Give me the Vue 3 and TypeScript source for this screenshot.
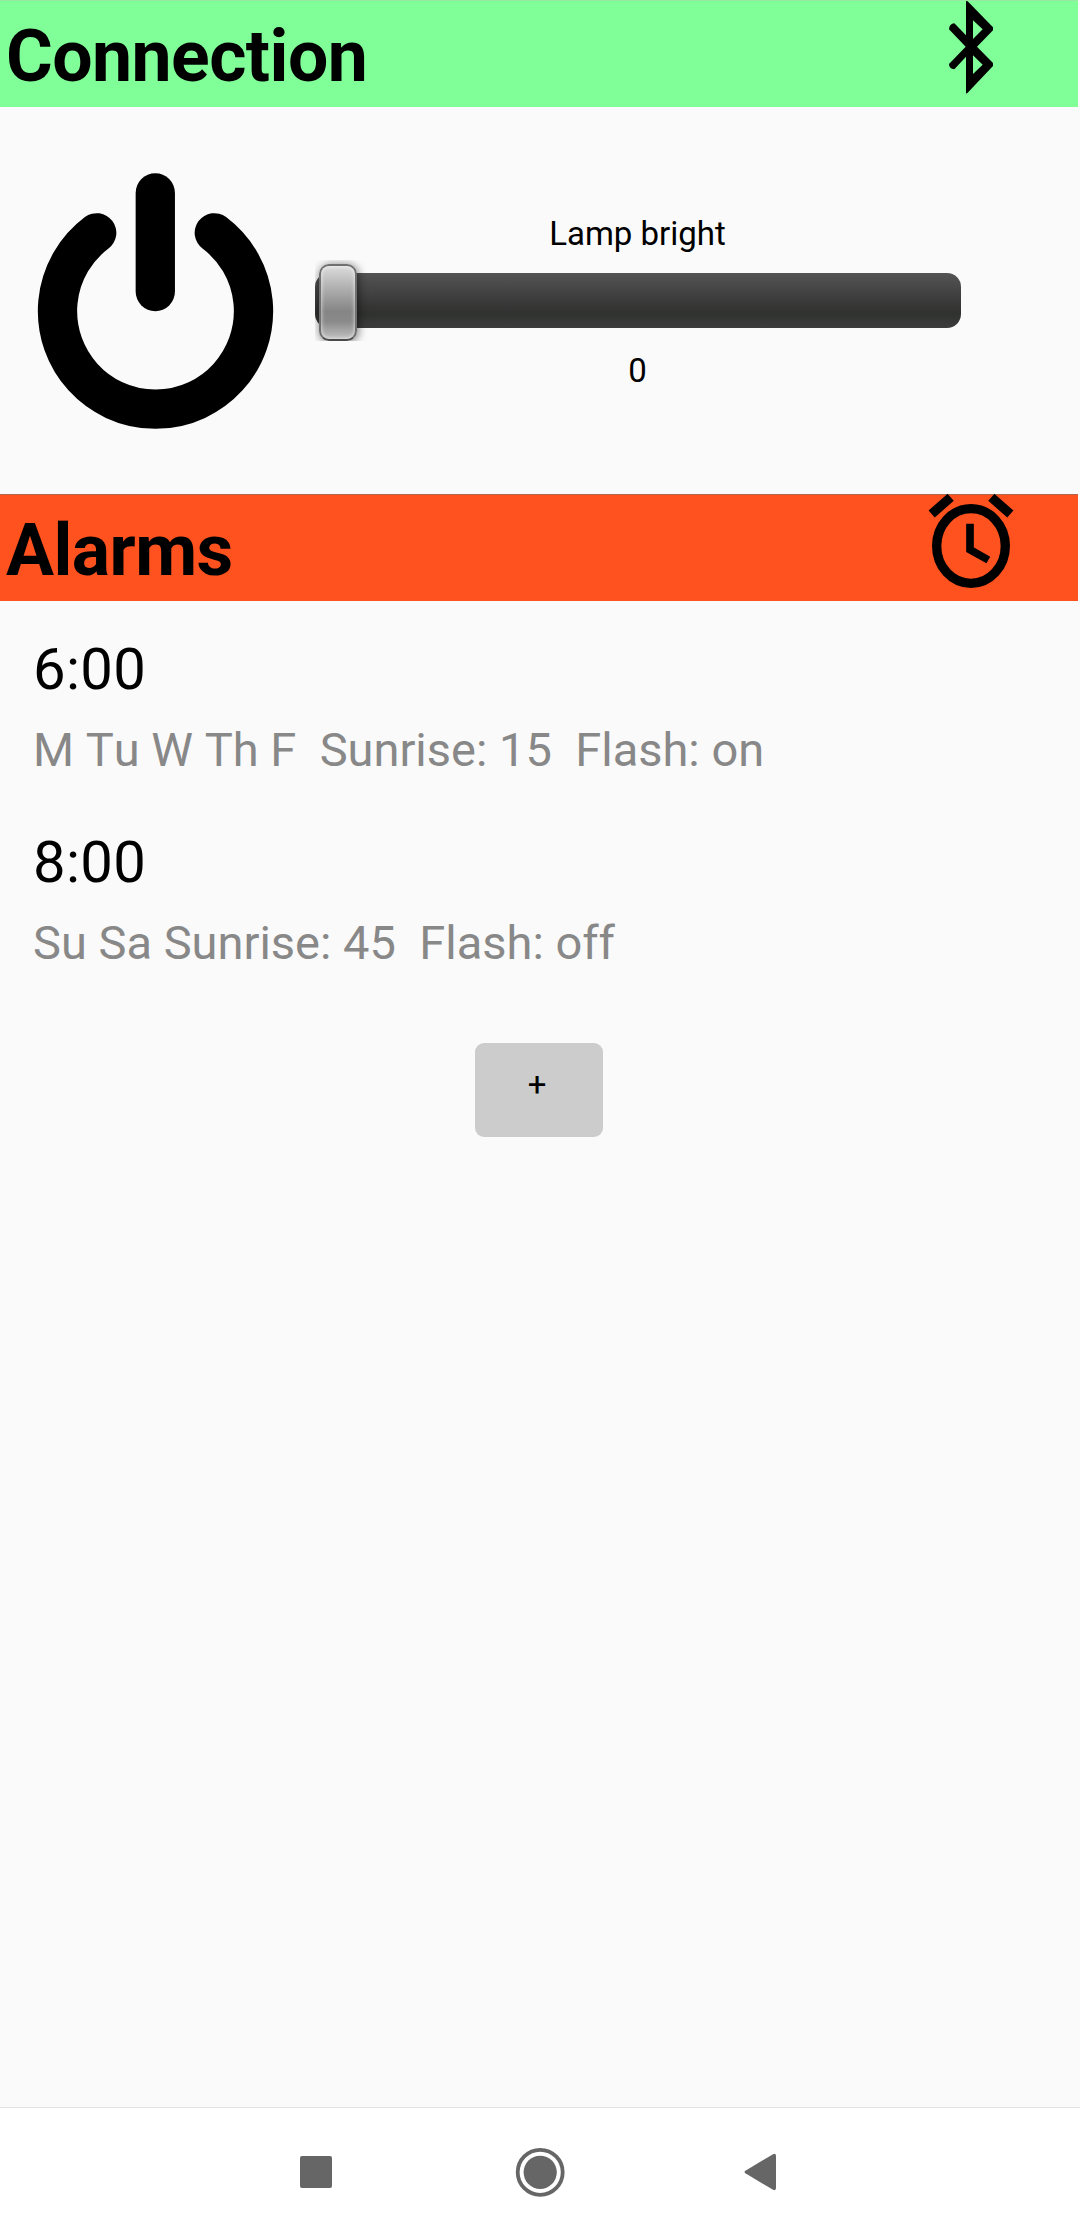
<script setup lang="ts">
import { ref } from 'vue'

interface Alarm {
  time: string
  details: string
}

const brightness = ref<number>(0)
const alarms = ref<Alarm[]>([
  { time: '6:00', details: 'M Tu W Th F  Sunrise: 15  Flash: on' },
  { time: '8:00', details: 'Su Sa Sunrise: 45  Flash: off' },
])
</script>

<template>
  <div class="screen">
    <header class="bar connection">
      <h1>Connection</h1>
      <svg class="bar-icon" viewBox="2 0 300 321">
        <path
          fill-rule="evenodd"
          d="M77 3L82 4L158 82V91L110 140L158 189V198L82 278L77 281V170L42 208Q26 206 26 192L76 140L26 88Q27 71 42 70L77 106ZM98 61V117L127 88ZM98 166V222L127 194Z"
        />
      </svg>
    </header>

    <section class="lamp">
      <svg class="power" viewBox="0 0 240 262">
        <g fill="none" stroke="#000" stroke-width="39.3" stroke-linecap="round">
          <path d="M60.7 64.8A98 98 0 1 0 178.3 64.8" />
          <path d="M119.3 25V123.5" />
        </g>
      </svg>
      <div class="control">
        <div class="label">Lamp bright</div>
        <div class="track">
          <div class="thumb-area"><div class="thumb"></div></div>
        </div>
        <div class="value">{{ brightness }}</div>
      </div>
    </section>

    <header class="bar alarms">
      <h1>Alarms</h1>
      <svg class="bar-icon" viewBox="2 0 300 321">
        <g fill="none" stroke="#000">
          <ellipse cx="92" cy="156" rx="103" ry="112" stroke-width="28" />
          <path d="M89 89V167L144 198" stroke-width="23" />
          <path d="M-26 60L31 10M153 10L210 60" stroke-width="28" />
        </g>
      </svg>
    </header>

    <ul class="list">
      <li v-for="alarm in alarms" :key="alarm.time">
        <div class="time">{{ alarm.time }}</div>
        <div class="details">{{ alarm.details }}</div>
      </li>
    </ul>

    <button class="add" type="button">+</button>

    <nav class="nav">
      <svg viewBox="0 0 50 50"><rect x="9" y="9" width="32" height="32" rx="2" /></svg>
      <svg viewBox="0 0 50 50">
        <circle cx="27.2" cy="25.3" r="16.6" />
        <circle cx="27.2" cy="25.3" r="22.5" fill="none" stroke="#666" stroke-width="3.8" />
      </svg>
      <svg viewBox="0 0 50 50">
        <path d="M10.4 23.8L38 7.2Q41 6 41 9V41Q41 44 38 42.8L10.4 26.2Q8.6 25 10.4 23.8Z" />
      </svg>
    </nav>
  </div>
</template>

<style>
body {
  margin: 0;
}
</style>

<style scoped>
.screen {
  display: flex;
  flex-direction: column;
  width: 1080px;
  height: 2237px;
  overflow: hidden;
  background: #fafafa;
  color: #000;
  font-family: Roboto, sans-serif;
}
.bar {
  box-sizing: border-box;
  display: flex;
  justify-content: space-between;
  flex: none;
  width: 1078px;
  height: 107px;
  padding: 0 37px 0 6px;
  overflow: hidden;
}
.connection {
  background: linear-gradient(#98e8a4 1px, #80ff99 1px);
}
.alarms {
  background: linear-gradient(#b2664c 1px, #ff521f 1px);
}
h1 {
  margin: 0;
  font-size: 71.5px;
  font-weight: 700;
  line-height: 113px;
  letter-spacing: -0.55px;
}
.bar-icon {
  width: 100px;
  height: 107px;
  overflow: visible;
}
.lamp {
  display: flex;
  flex: none;
  height: 387px;
}
.power {
  width: 240px;
  height: 262px;
  margin: 61px 39px 0 36px;
}
.control {
  width: 646px;
  padding-top: 107px;
  text-align: center;
  font-size: 33px;
  line-height: 40px;
}
.label,
.value {
  padding-right: 1px;
}
.track {
  position: relative;
  height: 55px;
  margin: 19px 0 23px;
  border-radius: 14px;
  background: linear-gradient(#545454, #363636 60%, #30322f 74%, #3c3c3c);
}
.thumb-area {
  position: absolute;
  left: 0;
  top: -13px;
  width: 62px;
  height: 81px;
  overflow: hidden;
}
.thumb {
  box-sizing: border-box;
  width: 38px;
  height: 77px;
  margin: 4px 0 0 4px;
  border: 2px solid #707070;
  border-bottom-color: #4a4a4a;
  border-radius: 10px;
  background: linear-gradient(#dcdcdc, #b0b0b0 30%, #858585 62%, #8a8a8a 76%, #c0c0c0);
  box-shadow: 1px 1px 10px rgba(0, 0, 0, 0.55), inset 0 0 4px rgba(255, 255, 255, 0.8);
}
.list {
  margin: 0;
  padding: 0;
  list-style: none;
}
.list li {
  height: 146px;
  padding: 33px 33px 14px;
}
.time {
  font-size: 58px;
  line-height: 70px;
  margin-bottom: 16px;
  letter-spacing: 0.3px;
}
.details {
  color: #888;
  font-size: 47.03px;
  line-height: 60px;
  white-space: pre;
  font-kerning: none;
}
.add {
  box-sizing: border-box;
  flex: none;
  width: 128px;
  height: 94px;
  margin: 56px 0 0 475px;
  padding: 0 4px 11px 0;
  border: 0;
  border-radius: 9px;
  background: #ccc;
  color: #000;
  font: 33px/40px Roboto, sans-serif;
}
.nav {
  box-sizing: border-box;
  display: flex;
  justify-content: space-between;
  flex: none;
  height: 130px;
  margin-top: auto;
  padding: 39px 295px 0 291px;
  border-top: 1px solid #e2e2e2;
  background: #fff;
}
.nav svg {
  width: 50px;
  height: 50px;
  overflow: visible;
  fill: #666;
}
</style>
